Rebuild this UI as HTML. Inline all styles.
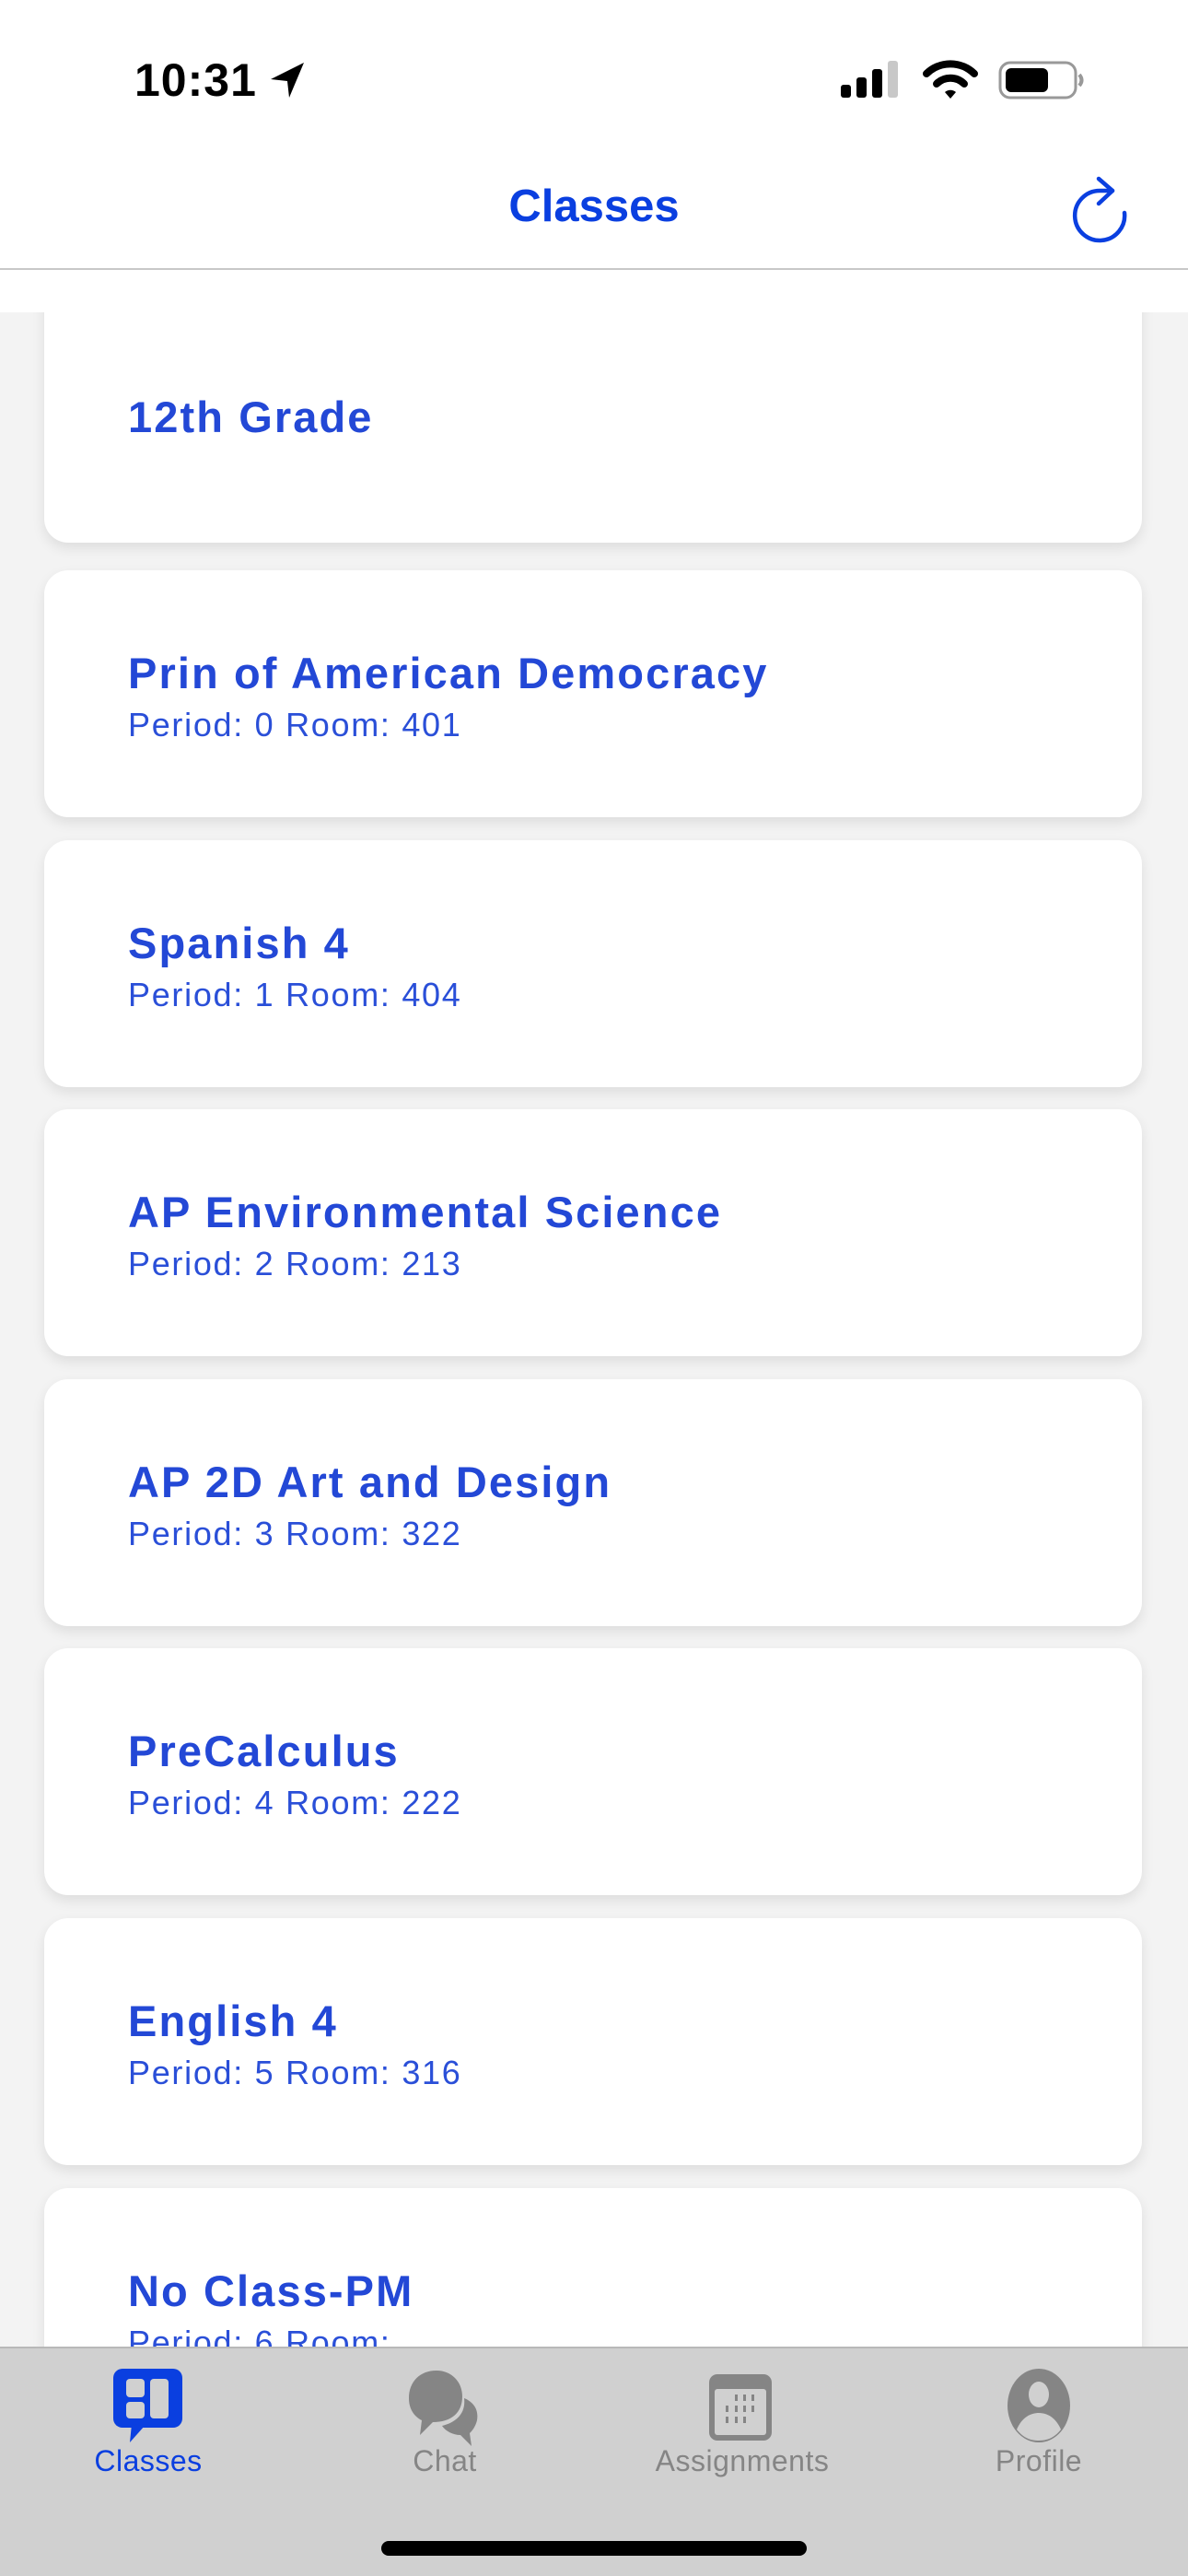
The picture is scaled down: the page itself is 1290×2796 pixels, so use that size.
<!DOCTYPE html>
<html><head><meta charset="utf-8"><style>
*{margin:0;padding:0;box-sizing:border-box}
body{width:1290px;height:2796px;overflow:hidden;background:#f3f3f3;font-family:"Liberation Sans",sans-serif;position:relative}
.header{position:absolute;left:0;top:0;width:1290px;height:293px;background:#fff;border-bottom:2px solid #c8c8c8;z-index:5}
.band{position:absolute;left:0;top:293px;width:1290px;height:46px;background:#fff;z-index:4}
.time{position:absolute;left:146px;top:58px;font-size:50px;font-weight:bold;color:#000;letter-spacing:1px}
.title{position:absolute;left:0;width:1290px;top:196px;text-align:center;font-size:49px;font-weight:bold;color:#0a3fe0}
.card{position:absolute;left:48px;width:1192px;height:268px;background:#fff;border-radius:26px;box-shadow:0 6px 14px rgba(0,0,0,0.09)}
.card h2{position:absolute;left:91px;top:84px;font-size:47px;font-weight:bold;color:#2348d6;letter-spacing:2.1px}
.card p{position:absolute;left:91px;top:147px;font-size:36px;color:#2a4fd8;letter-spacing:1.7px}
.tab{position:absolute;top:2547px;left:0;width:1290px;height:249px;background:#d0d0d0;border-top:2px solid #b8b8b8;z-index:5}
.lbl{position:absolute;top:104px;font-size:32px;color:#858585;width:260px;text-align:center;letter-spacing:0.5px}
.home{position:absolute;left:414px;top:2758px;width:462px;height:16px;border-radius:8px;background:#000;z-index:6}
</style></head><body>
<div class="header">
 <div class="time">10:31</div>
 <svg style="position:absolute;left:292px;top:66px" width="42" height="42" viewBox="0 0 42 42"><path d="M38 2 L2 20 L20 22 L22 40 Z" fill="#000"/></svg>
 <svg style="position:absolute;left:913px;top:66px" width="66" height="40"><rect x="0" y="26" width="11" height="14" rx="3" fill="#000"/><rect x="17" y="18" width="11" height="22" rx="3" fill="#000"/><rect x="34" y="9" width="11" height="31" rx="3" fill="#000"/><rect x="51" y="0" width="11" height="40" rx="3" fill="#c8c8c8"/></svg>
 <svg style="position:absolute;left:1002px;top:64px" width="60" height="44" viewBox="0 0 60 44"><path d="M4 16 A37 37 0 0 1 56 16" stroke="#000" stroke-width="8" fill="none" stroke-linecap="round"/><path d="M15 27 A21 21 0 0 1 45 27" stroke="#000" stroke-width="8" fill="none" stroke-linecap="round"/><path d="M24 36 L30 43 L36 36 A9 9 0 0 0 24 36Z" fill="#000"/></svg>
 <svg style="position:absolute;left:1084px;top:66px" width="96" height="42"><rect x="2" y="2" width="82" height="38" rx="11" fill="none" stroke="#999" stroke-width="3"/><rect x="8" y="8" width="46" height="26" rx="6" fill="#000"/><path d="M88 15 Q93 21 88 27" stroke="#999" stroke-width="4" fill="none"/></svg>
 <div class="title">Classes</div>
 <svg style="position:absolute;left:1160px;top:190px" width="70" height="80" viewBox="1160 190 70 80"><path d="M1221 231 A27 27 0 1 1 1194 207 L1208 207" stroke="#0a3fe0" stroke-width="4.5" fill="none" stroke-linecap="round"/><path d="M1193 194 L1208 207 L1193 221" stroke="#0a3fe0" stroke-width="4.5" fill="none" stroke-linecap="round" stroke-linejoin="round"/></svg>
</div>
<div class="band"></div>
<div class="card" style="top:300px;height:289px"><h2 style="top:125px">12th Grade</h2></div>
<div class="card" style="top:619px"><h2>Prin of American Democracy</h2><p>Period: 0 Room: 401</p></div>
<div class="card" style="top:912px"><h2>Spanish 4</h2><p>Period: 1 Room: 404</p></div>
<div class="card" style="top:1204px"><h2>AP Environmental Science</h2><p>Period: 2 Room: 213</p></div>
<div class="card" style="top:1497px"><h2>AP 2D Art and Design</h2><p>Period: 3 Room: 322</p></div>
<div class="card" style="top:1789px"><h2>PreCalculus</h2><p>Period: 4 Room: 222</p></div>
<div class="card" style="top:2082px"><h2>English 4</h2><p>Period: 5 Room: 316</p></div>
<div class="card" style="top:2375px"><h2>No Class-PM</h2><p>Period: 6 Room:</p></div>
<div class="tab">
 <svg style="position:absolute;left:123px;top:22px" width="76" height="82" viewBox="0 0 76 82"><rect x="0" y="0" width="75" height="64" rx="10" fill="#0a3fe0"/><path d="M20 60 L18 80 L34 62Z" fill="#0a3fe0"/><rect x="14" y="11" width="20" height="20" rx="4" fill="#d0d0d0"/><rect x="14" y="36" width="20" height="18" rx="4" fill="#d0d0d0"/><rect x="40" y="11" width="20" height="43" rx="4" fill="#d0d0d0"/></svg>
 <div class="lbl" style="left:31px;color:#0a3fe0">Classes</div>
 <svg style="position:absolute;left:444px;top:24px" width="76" height="82" viewBox="0 0 76 82"><path d="M30 0 C12 0 0 12 0 30 C0 42 6 50 14 54 L12 70 L26 56 C46 56 58 46 58 28 C58 12 46 0 30 0Z" fill="#858585"/><path d="M60 30 C70 34 76 42 74 54 C72 62 68 66 66 68 L68 82 L56 70 C48 70 40 66 36 60 C52 56 62 46 60 30Z" fill="#858585"/></svg>
 <div class="lbl" style="left:353px">Chat</div>
 <svg style="position:absolute;left:770px;top:28px" width="70" height="74"><rect x="0" y="0" width="68" height="72" rx="9" fill="#858585"/><rect x="6" y="16" width="56" height="50" rx="3" fill="#d0d0d0"/><g fill="#858585"><rect x="28" y="22" width="3" height="7"/><rect x="37" y="22" width="3" height="7"/><rect x="46" y="22" width="3" height="7"/><rect x="18" y="34" width="3" height="7"/><rect x="28" y="34" width="3" height="7"/><rect x="37" y="34" width="3" height="7"/><rect x="46" y="34" width="3" height="7"/><rect x="18" y="46" width="3" height="7"/><rect x="28" y="46" width="3" height="7"/><rect x="37" y="46" width="3" height="7"/></g></svg>
 <div class="lbl" style="left:676px">Assignments</div>
 <svg style="position:absolute;left:1092px;top:22px" width="72" height="82" viewBox="0 0 72 82"><ellipse cx="36" cy="40" rx="34" ry="40" fill="#858585"/><ellipse cx="36" cy="28" rx="11" ry="14" fill="#d0d0d0"/><path d="M12 66 C18 52 28 48 36 48 C44 48 54 52 60 66 C52 76 44 78 36 78 C28 78 20 76 12 66Z" fill="#d0d0d0"/></svg>
 <div class="lbl" style="left:998px">Profile</div>
</div>
<div class="home"></div>
</body></html>
